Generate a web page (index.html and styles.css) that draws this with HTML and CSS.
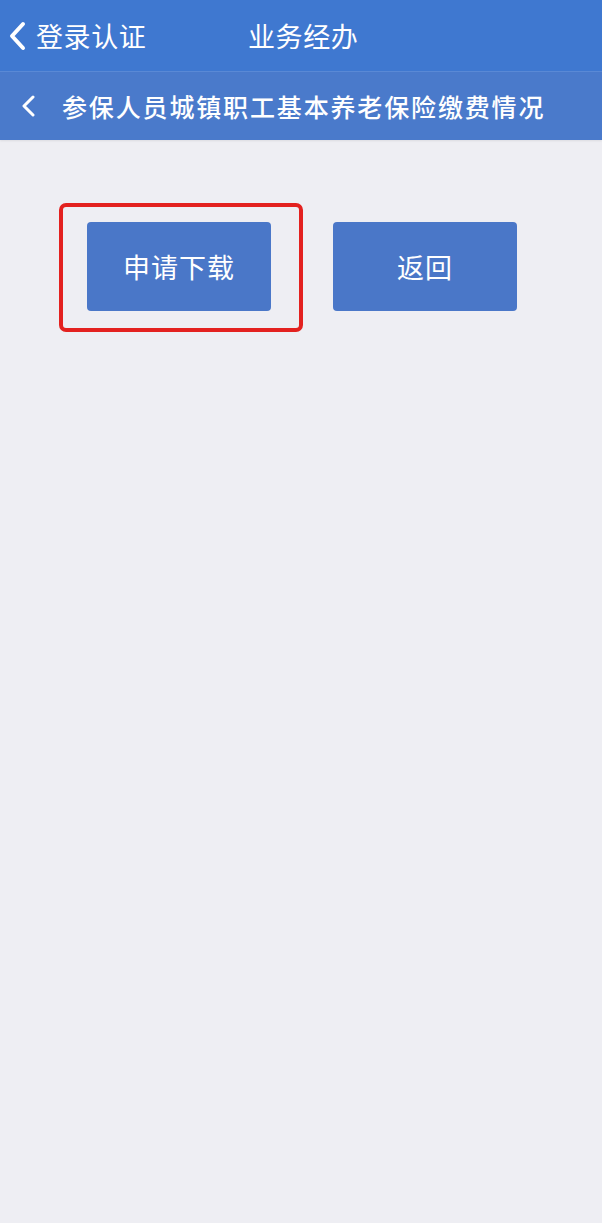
FILE: index.html
```html
<!DOCTYPE html>
<html lang="zh">
<head>
<meta charset="utf-8">
<link rel="stylesheet" href="styles.css">
</head>
<body>
<header class="topbar">
  <div class="back">
    <svg class="chev" width="20" height="30" viewBox="0 0 20 30"><path d="M16 3 L5 15 L16 27" fill="none" stroke="#fff" stroke-width="4" stroke-linecap="round" stroke-linejoin="round"/></svg>
    <span class="back-text">登录认证</span>
  </div>
  <span class="title">业务经办</span>
</header>
<div class="subbar">
  <svg class="chev2" width="16" height="22" viewBox="0 0 16 22"><path d="M12 2 L3 11 L12 20" fill="none" stroke="#fff" stroke-width="3" stroke-linecap="round" stroke-linejoin="round"/></svg>
  <span class="subtitle">参保人员城镇职工基本养老保险缴费情况</span>
</div>
<main class="content">
  <div class="actions">
    <div class="highlight">
      <button class="btn">申请下载</button>
    </div>
    <button class="btn">返回</button>
  </div>
</main>
</body>
</html>
```

FILE: styles.css
```css
html, body {
  margin: 0;
  padding: 0;
}
body {
  width: 602px;
  height: 1223px;
  background: #eeeef3;
  font-family: "Noto Sans CJK SC", "Noto Sans", sans-serif;
  overflow: hidden;
}
.topbar {
  height: 72px;
  background: #3f78d0;
  display: flex;
  align-items: center;
  color: #fff;
  box-sizing: border-box;
  border-bottom: 1px solid #5b8ad6;
}
.back {
  display: flex;
  align-items: center;
  padding-left: 7px;
  width: 241px;
}
.chev {
  margin-right: 9px;
}
.back-text, .title {
  font-size: 27px;
  line-height: 1;
  letter-spacing: 0.6px;
}
.subbar {
  height: 68px;
  background: #4a7acb;
  display: flex;
  align-items: center;
  color: #fff;
  padding-left: 21px;
  box-shadow: 0 1px 2px rgba(0,0,0,0.08);
}
.chev2 {
  margin-right: 25px;
}
.subtitle {
  font-size: 25px;
  font-weight: 500;
  letter-spacing: 1.85px;
  line-height: 1;
}
.content {
  padding-top: 63px;
}
.actions {
  display: flex;
  align-items: flex-start;
  padding-left: 59px;
}
.highlight {
  border: 4px solid #e3211f;
  border-radius: 7px;
  padding: 15px 28px 17px 24px;
  margin-right: 30px;
}
.btn {
  display: block;
  width: 184px;
  height: 89px;
  border: none;
  border-radius: 4px;
  background: #4a77c8;
  color: #fff;
  font-family: "Noto Sans CJK SC", "Noto Sans", sans-serif;
  font-size: 27px;
  letter-spacing: 1px;
  padding: 0;
}
.actions > .btn {
  margin-top: 19px;
}
```
